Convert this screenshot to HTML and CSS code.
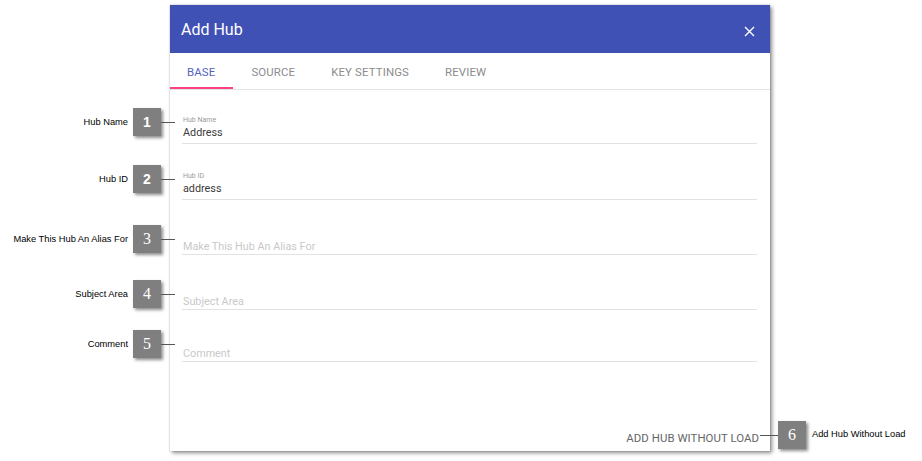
FILE: index.html
```html
<!DOCTYPE html>
<html>
<head>
<meta charset="utf-8">
<link rel="stylesheet" href="styles.css">
</head>
<body>
<div class="page">
  <div class="dialog">
    <div class="dialog-header">
      <span class="dialog-title">Add Hub</span>
      <svg class="close" width="11" height="11" viewBox="0 0 11 11"><path d="M1 1L10 10M10 1L1 10" stroke="#fff" stroke-width="1.4" fill="none"/></svg>
    </div>
    <div class="tabs">
      <div class="tab active">Base</div>
      <div class="tab">Source</div>
      <div class="tab">Key Settings</div>
      <div class="tab">Review</div>
    </div>
    <div class="form">
      <div class="field filled">
        <div class="field-label">Hub Name</div>
        <div class="field-value">Address</div>
      </div>
      <div class="field filled tall">
        <div class="field-label">Hub ID</div>
        <div class="field-value">address</div>
      </div>
      <div class="field">
        <div class="field-placeholder">Make This Hub An Alias For</div>
      </div>
      <div class="field">
        <div class="field-placeholder">Subject Area</div>
      </div>
      <div class="field last">
        <div class="field-placeholder">Comment</div>
      </div>
    </div>
    <div class="dialog-footer">
      <span class="text-button">Add Hub Without Load</span>
    </div>
  </div>

  <div class="callout callout-left c1"><span class="callout-label">Hub Name</span><span class="badge sans">1</span><span class="leader"></span></div>
  <div class="callout callout-left c2"><span class="callout-label">Hub ID</span><span class="badge sans">2</span><span class="leader"></span></div>
  <div class="callout callout-left c3"><span class="callout-label">Make This Hub An Alias For</span><span class="badge serif">3</span><span class="leader"></span></div>
  <div class="callout callout-left c4"><span class="callout-label">Subject Area</span><span class="badge serif">4</span><span class="leader"></span></div>
  <div class="callout callout-left c5"><span class="callout-label">Comment</span><span class="badge serif">5</span><span class="leader"></span></div>
  <div class="callout callout-right c6"><span class="leader long"></span><span class="badge serif">6</span><span class="callout-label">Add Hub Without Load</span></div>
</div>
</body>
</html>
```
FILE: styles.css
```css
* { box-sizing: border-box; }
html, body { margin: 0; padding: 0; background: #fff; }
body { font-family: Roboto, "Liberation Sans", Arial, sans-serif; }

.page {
  position: relative;
  width: 922px;
  height: 461px;
  overflow: hidden;
  padding-top: 5px;
}

.dialog {
  margin-left: 170px;
  width: 600px;
  height: 446px;
  background: #fff;
  display: flex;
  flex-direction: column;
  box-shadow: 0 0 1px rgba(0,0,0,0.35), 2px 2px 4px rgba(0,0,0,0.45);
}

.dialog-header {
  height: 48px;
  background: #3f51b5;
  display: flex;
  align-items: center;
  justify-content: space-between;
  padding: 0 15px 0 11px;
}
.dialog-title {
  color: #fff;
  font-size: 16px;
  line-height: 20px;
  margin-top: 2px;
}
.close { margin-top: 4px; }

.tabs {
  height: 37px;
  display: flex;
  border-bottom: 1px solid #e4e4e4;
}
.tab {
  padding: 3px 18px 0;
  display: flex;
  align-items: center;
  font-size: 11.4px;
  letter-spacing: 0.15px;
  text-transform: uppercase;
  color: #8c8c8c;
  border-bottom: 2px solid transparent;
}
.tab.active {
  color: #5464bd;
  border-bottom-color: #ff4081;
  padding-left: 17px;
}

.form {
  padding: 13px 13px 0 12px;
  display: flex;
  flex-direction: column;
  gap: 14px;
}
.field {
  height: 41px;
  border-bottom: 1px solid #e2e2e2;
  display: flex;
  flex-direction: column;
  justify-content: flex-end;
  padding-bottom: 0;
  padding-left: 1px;
}
.field.filled { padding-bottom: 3px; }
.field.tall { height: 42px; }
.field.last { height: 38px; }
.field-label {
  font-size: 7px;
  line-height: 9px;
  color: #9a9a9a;
  margin-bottom: 1px;
}
.field-value {
  font-size: 10.8px;
  line-height: 14px;
  color: #3a3a3a;
}
.field-placeholder {
  font-size: 10.8px;
  line-height: 14px;
  color: #c9c9c9;
}

.dialog-footer {
  margin-top: auto;
  display: flex;
  justify-content: flex-end;
  padding: 0 11px 6px 0;
}
.text-button {
  font-size: 11.4px;
  letter-spacing: 0.05px;
  line-height: 14px;
  text-transform: uppercase;
  color: #666;
}

.callout {
  position: absolute;
  display: flex;
  align-items: center;
  height: 28px;
}
.callout-left { right: 747px; }
.c1 { top: 108px; }
.c2 { top: 165px; }
.c3 { top: 225px; }
.c4 { top: 280px; }
.c5 { top: 330px; }
.c6 { top: 421px; left: 760px; }

.callout-label {
  font-family: "Liberation Sans", Arial, sans-serif;
  font-size: 9.3px;
  color: #000;
  white-space: nowrap;
}
.callout-left .callout-label { margin-right: 5px; }
.callout-right .callout-label { margin-left: 6px; margin-top: -2px; }

.badge {
  width: 28px;
  height: 28px;
  background: #7f7f7f;
  color: #fff;
  display: flex;
  align-items: center;
  justify-content: center;
  font-size: 15px;
  box-shadow: 2px 2px 3px rgba(0,0,0,0.45);
}
.badge.sans { font-family: "Liberation Sans", Arial, sans-serif; font-weight: bold; font-size: 14px; }
.badge.serif { font-family: "Liberation Serif", "Times New Roman", serif; font-size: 16px; }

.leader {
  width: 14px;
  height: 1px;
  background: #555;
}
.leader.long { width: 18px; }
```
